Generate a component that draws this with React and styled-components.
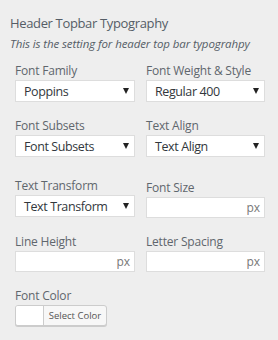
import React from "react";
import styled, { createGlobalStyle } from "styled-components";

const Global = createGlobalStyle`
  html, body { margin: 0; padding: 0; background: #eeeeee; }
  body { font-family: "Open Sans", "Noto Sans", sans-serif; }
`;

const Panel = styled.div`
  width: 278px;
  height: 340px;
  background: #eeeeee;
  box-sizing: border-box;
  padding: 13px 0 0 0;
  color: #555d66;
`;

const Title = styled.h3`
  margin: 0 0 0 10px;
  font-size: 13px;
  font-weight: 400;
  line-height: 20px;
  letter-spacing: -0.35px;
  color: #555d66;
`;

const Description = styled.p`
  margin: 3px 0 0 10px;
  font-size: 11.5px;
  font-style: italic;
  line-height: 16px;
  color: #555d66;
  letter-spacing: -0.1px;
`;

const Grid = styled.div`
  display: grid;
  grid-template-columns: 120px 119px;
  column-gap: 11px;
  padding: 11px 0 0 15px;
`;

const Field = styled.div`
  display: flex;
  flex-direction: column;
  margin-bottom: ${(p) => p.$mb ?? 16}px;
  padding-top: ${(p) => p.$pt ?? 0}px;
`;

const Label = styled.label`
  font-size: 12px;
  line-height: 16px;
  color: #5f666d;
  margin-bottom: 1px;
  white-space: nowrap;
  letter-spacing: -0.2px;
`;

const SelectBox = styled.div`
  height: 22px;
  box-sizing: border-box;
  background: #fff;
  border: 1px solid #dddddd;
  display: flex;
  align-items: center;
  justify-content: space-between;
  padding: 0 5px 0 8px;
  font-size: 12.5px;
  color: #32373c;
  letter-spacing: -0.4px;
`;

const Arrow = styled.span`
  width: 0;
  height: 0;
  border-left: 3px solid transparent;
  border-right: 3px solid transparent;
  border-top: 6px solid #222;
`;

const InputBox = styled.div`
  height: 21px;
  box-sizing: border-box;
  background: #fff;
  border: 1px solid #dddddd;
  display: flex;
  align-items: center;
  justify-content: flex-end;
  padding: 0 4px;
  font-size: 12px;
  color: #777;
`;

const ColorButton = styled.div`
  display: flex;
  width: 92px;
  height: 21px;
  box-sizing: border-box;
  border: 1px solid #cccccc;
  border-radius: 3px;
  overflow: hidden;
  background: #f7f7f7;
  box-shadow: 0 1px 0 #ccc;
`;

const Swatch = styled.span`
  width: 27px;
  background: #fff;
  border-right: 1px solid #cccccc;
`;

const ColorText = styled.span`
  flex: 1;
  display: flex;
  align-items: center;
  justify-content: center;
  font-size: 9.5px;
  color: #555;
`;

const Select = ({ value }) => (
  <SelectBox>
    <span>{value}</span>
    <Arrow />
  </SelectBox>
);

export default function App() {
  return (
    <>
      <Global />
      <Panel>
        <Title>Header Topbar Typography</Title>
        <Description>This is the setting for header top bar typograhpy</Description>
        <Grid>
          <Field>
            <Label>Font Family</Label>
            <Select value="Poppins" />
          </Field>
          <Field>
            <Label>Font Weight &amp; Style</Label>
            <Select value="Regular 400" />
          </Field>
          <Field $mb={21}>
            <Label>Font Subsets</Label>
            <Select value="Font Subsets" />
          </Field>
          <Field $mb={21}>
            <Label>Text Align</Label>
            <Select value="Text Align" />
          </Field>
          <Field>
            <Label>Text Transform</Label>
            <Select value="Text Transform" />
          </Field>
          <Field $pt={2}>
            <Label>Font Size</Label>
            <InputBox>px</InputBox>
          </Field>
          <Field>
            <Label>Line Height</Label>
            <InputBox>px</InputBox>
          </Field>
          <Field>
            <Label>Letter Spacing</Label>
            <InputBox>px</InputBox>
          </Field>
          <Field>
            <Label>Font Color</Label>
            <ColorButton>
              <Swatch />
              <ColorText>Select Color</ColorText>
            </ColorButton>
          </Field>
        </Grid>
      </Panel>
    </>
  );
}
